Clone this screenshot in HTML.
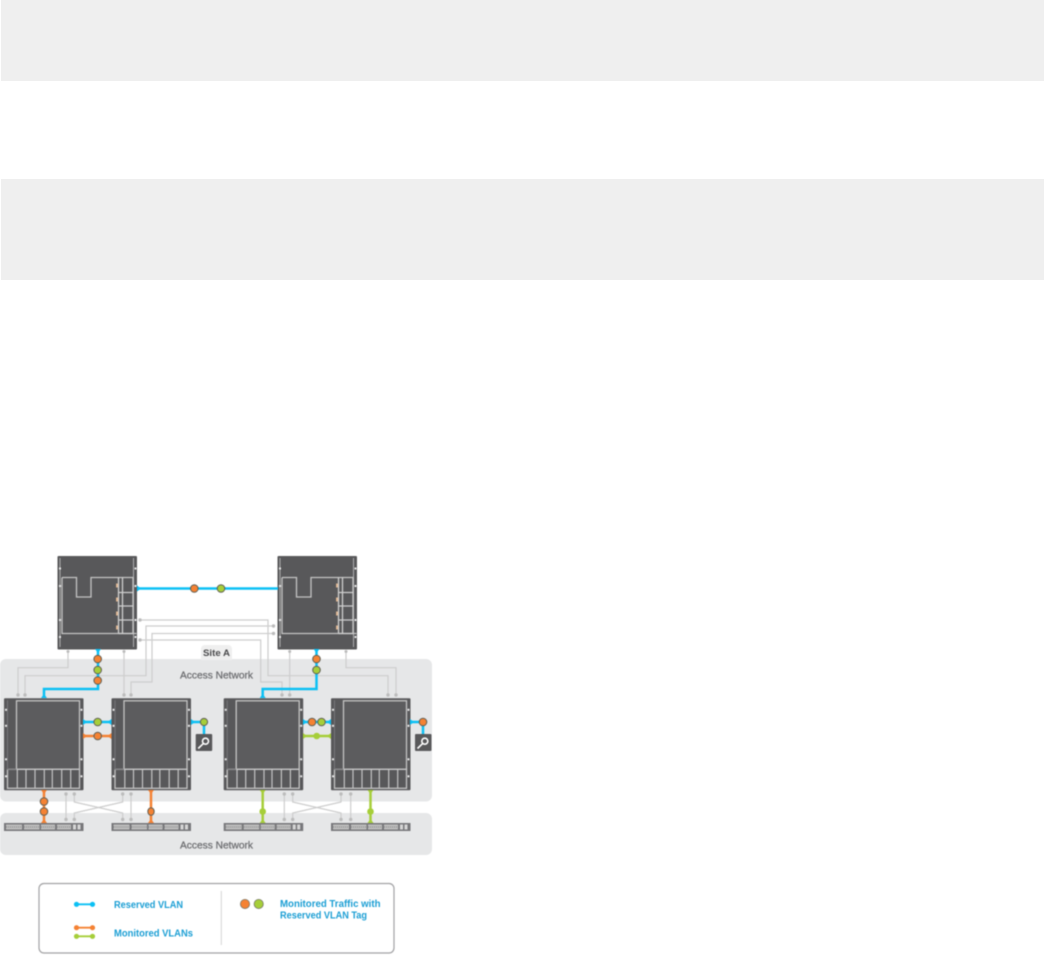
<!DOCTYPE html>
<html>
<head>
<meta charset="utf-8">
<style>
html,body{margin:0;padding:0;background:#fff;width:1044px;height:960px;overflow:hidden}
.bar{position:absolute;left:1px;right:0;background:#efefef}
svg{position:absolute;left:0;top:0;filter:blur(.5px)}
text{font-family:"Liberation Sans",sans-serif}
</style>
</head>
<body>
<div class="bar" style="top:0;height:81px"></div>
<div class="bar" style="top:179px;height:101px"></div>
<svg width="1044" height="960" viewBox="0 0 1044 960" xmlns="http://www.w3.org/2000/svg">
<defs>
<g id="top">
  <rect x="0" y="0" width="79.5" height="93.5" rx="1" fill="#58585a"/>
  <path d="M2.5 2V91M76 2V91" stroke="#c4c4c4" stroke-width="1" fill="none" opacity=".8"/>
  <path d="M4.5 21.5H19V41H33.5V21.5H75.5V77.5M4.5 21.5V77.5H79" stroke="#c4c4c4" stroke-width="1.3" fill="none"/>
  <path d="M61 21.5V77.5M65 21.5V77.5M61 36.5H76M61 50H76M61 64H76M61 77.5H76" stroke="#cfcfcf" stroke-width="1.3" fill="none"/>
  <path d="M59.5 27.5v4M59.5 41.5v4M59.5 55.5v4M59.5 69.5v4" stroke="#e8bd98" stroke-width="1.8" fill="none"/>
  <g fill="#e8e8e8"><rect x="1.5" y="11.5" width="2" height="2"/><rect x="1.5" y="29" width="2" height="2"/><rect x="1.5" y="63" width="2" height="2"/><rect x="1.5" y="80" width="2" height="2"/><rect x="77" y="11.5" width="2" height="2"/><rect x="77" y="29" width="2" height="2"/><rect x="77" y="63" width="2" height="2"/><rect x="77" y="80" width="2" height="2"/></g>
</g>
<g id="low">
  <rect x="0" y="0" width="79.5" height="92" rx="1" fill="#58585a"/>
  <rect x="12.5" y="2.5" width="63" height="68.5" fill="#5c5c5e" stroke="#c4c4c4" stroke-width="1.3"/>
  <rect x="3.5" y="71" width="72" height="19" fill="none" stroke="#c4c4c4" stroke-width="1.3"/>
  <path d="M13.3 71V90M22 71V90M31 71V90M40.3 71V90M48.3 71V90M57.7 71V90M66.7 71V90" stroke="#c4c4c4" stroke-width="1.2" fill="none"/>
  <path d="M3.5 2V71H12.5" stroke="#77777a" stroke-width="1" fill="none"/>
  <g fill="#e8e8e8"><rect x="1" y="10.5" width="2" height="2"/><rect x="1" y="26.5" width="2" height="2"/><rect x="1" y="60" width="2" height="2"/><rect x="1" y="77" width="2" height="2"/><rect x="76.5" y="10.5" width="2" height="2"/><rect x="76.5" y="26.5" width="2" height="2"/><rect x="76.5" y="60" width="2" height="2"/><rect x="76.5" y="77" width="2" height="2"/></g>
</g>
<g id="sw">
  <rect x="0" y="0" width="79.5" height="8" fill="#77777a"/>
  <rect x="2" y="1.5" width="16" height="5" fill="#bcbcbc"/>
  <rect x="20" y="1.5" width="15.5" height="5" fill="#bcbcbc"/>
  <rect x="37" y="1.5" width="14" height="5" fill="#bcbcbc"/>
  <rect x="53" y="1.5" width="14" height="5" fill="#bcbcbc"/>
  <rect x="69" y="1.5" width="3" height="5" fill="#d6d6d6"/>
  <rect x="73.5" y="1.5" width="3" height="5" fill="#d6d6d6"/>
  <path d="M2 4H18M20 4H35.5M37 4H51M53 4H67" stroke="#777" stroke-width=".8" stroke-dasharray="1 1"/>
</g>
<g id="mag">
  <rect x="0" y="0" width="16.5" height="17" rx="1" fill="#58585a"/>
  <circle cx="9.8" cy="7.2" r="3" fill="none" stroke="#fff" stroke-width="1.6"/>
  <path d="M7.6 9.6L2.5 14.5" stroke="#fff" stroke-width="1.6"/>
</g>
</defs>

<rect x="0" y="659" width="432" height="142.5" rx="6" fill="#e6e7e8"/>
<rect x="0" y="813" width="432" height="42" rx="6" fill="#e6e7e8"/>
<path d="M201 660V649a4 4 0 0 1 4-4H228a4 4 0 0 1 4 4V660Z" fill="#efefef"/>
<text x="203" y="656" font-size="9.5" font-weight="bold" fill="#4a4a4c" textLength="27" lengthAdjust="spacingAndGlyphs">Site A</text>
<text x="180" y="678.5" font-size="10.5" fill="#6d6e71" stroke="#6d6e71" stroke-width=".25" textLength="73" lengthAdjust="spacingAndGlyphs">Access Network</text>
<text x="180" y="848.5" font-size="10.5" fill="#6d6e71" stroke="#6d6e71" stroke-width=".25" textLength="73" lengthAdjust="spacingAndGlyphs">Access Network</text>

<!-- grey wiring -->
<g fill="none" stroke="#cdcdcd" stroke-width="1.2">
  <path d="M68 651V667.7H18V695"/>
  <path d="M124 651V695"/>
  <path d="M25 695V675.7H146V626H273.5"/>
  <path d="M131 695V682H152V633.5H273.5"/>
  <path d="M140 620H268V675.7H388V695"/>
  <path d="M140 640H260.7V682H282V695"/>
  <path d="M289.7 651V695"/>
  <path d="M346 651V667.7H396V695"/>
  <path d="M66 794V819M131 794V819M74.3 794V802L122.7 813V819M122.7 794V802L74.3 813V819"/>
  <path d="M284.3 794V819M350.7 794V819M292.7 794V802L341 813V819M341 794V802L292.7 813V819"/>
</g>
<g fill="#bcbcbc">
  <circle cx="140" cy="620" r="1.7"/><circle cx="140" cy="640" r="1.7"/><circle cx="273.5" cy="626" r="1.7"/><circle cx="273.5" cy="633.5" r="1.7"/>
  <circle cx="68" cy="651.5" r="1.5"/><circle cx="124" cy="651.5" r="1.5"/><circle cx="289.7" cy="651.5" r="1.5"/><circle cx="346" cy="651.5" r="1.5"/>
  <circle cx="18" cy="695" r="1.7"/><circle cx="25" cy="695" r="1.7"/><circle cx="124" cy="695" r="1.7"/><circle cx="131" cy="695" r="1.7"/>
  <circle cx="282" cy="695" r="1.7"/><circle cx="289.7" cy="695" r="1.7"/><circle cx="388" cy="695" r="1.7"/><circle cx="396" cy="695" r="1.7"/>
  <circle cx="66" cy="794" r="1.7"/><circle cx="74.3" cy="794" r="1.7"/><circle cx="122.7" cy="794" r="1.7"/><circle cx="131" cy="794" r="1.7"/>
  <circle cx="66" cy="819.5" r="1.7"/><circle cx="74.3" cy="819.5" r="1.7"/><circle cx="122.7" cy="819.5" r="1.7"/><circle cx="131" cy="819.5" r="1.7"/>
  <circle cx="284.3" cy="794" r="1.7"/><circle cx="292.7" cy="794" r="1.7"/><circle cx="341" cy="794" r="1.7"/><circle cx="350.7" cy="794" r="1.7"/>
  <circle cx="284.3" cy="819.5" r="1.7"/><circle cx="292.7" cy="819.5" r="1.7"/><circle cx="341" cy="819.5" r="1.7"/><circle cx="350.7" cy="819.5" r="1.7"/>
</g>

<!-- devices -->
<use href="#top" x="57.5" y="556"/>
<use href="#top" x="277.5" y="556"/>
<use href="#low" x="4" y="698.3"/>
<use href="#low" x="111.5" y="698.3"/>
<use href="#low" x="223.7" y="698.3"/>
<use href="#low" x="331" y="698.3"/>
<use href="#sw" x="4" y="823"/>
<use href="#sw" x="111.5" y="823"/>
<use href="#sw" x="223.7" y="823"/>
<use href="#sw" x="331" y="823"/>
<use href="#mag" x="195.7" y="734"/>
<use href="#mag" x="415" y="734"/>

<!-- blue links -->
<g fill="none" stroke="#0cc0f4" stroke-width="2.5">
  <path d="M137 588.5H278"/>
  <path d="M98 649V689H44V698"/>
  <path d="M316.5 649V689H262.7V698"/>
  <path d="M83 722H111.5"/>
  <path d="M191 722H204V734"/>
  <path d="M303 722H331"/>
  <path d="M410 722H423V734"/>
</g>
<g fill="#0cc0f4">
  <path d="M137 585.5L141 588.5L137 591.5Z"/>
  <path d="M95 649H101L98 653Z"/>
  <path d="M313.5 649H319.5L316.5 653Z"/>
  <path d="M41 698H47L44 694Z"/>
  <path d="M259.7 698H265.7L262.7 694Z"/>
  <path d="M83 719L87 722L83 725ZM111.5 719L107.5 722L111.5 725ZM191 719L195 722L191 725ZM303 719L307 722L303 725ZM331 719L327 722L331 725ZM410 719L414 722L410 725Z"/>
</g>

<!-- orange / green links -->
<g fill="none" stroke-width="2.5">
  <path d="M83 736H111.5" stroke="#f58233"/>
  <path d="M44 790V823" stroke="#f58233"/>
  <path d="M151 790V823" stroke="#f58233"/>
  <path d="M303 736H331" stroke="#a6ce39"/>
  <path d="M262.7 790V823" stroke="#a6ce39"/>
  <path d="M370.5 790V823" stroke="#a6ce39"/>
</g>
<path d="M83 733L87 736L83 739ZM111.5 733L107.5 736L111.5 739ZM41 790H47L44 794ZM41 823H47L44 819ZM148 790H154L151 794ZM148 823H154L151 819Z" fill="#f58233"/>
<path d="M303 733L307 736L303 739ZM331 733L327 736L331 739ZM259.7 790H265.7L262.7 794ZM259.7 823H265.7L262.7 819ZM367.5 790H373.5L370.5 794ZM367.5 823H373.5L370.5 819Z" fill="#a6ce39"/>

<!-- tag circles -->
<g stroke="#5f5f55" stroke-width="1">
  <g fill="#f58233">
    <circle cx="194.3" cy="588.5" r="3.8"/>
    <circle cx="97.7" cy="659" r="3.8"/><circle cx="97.7" cy="680.5" r="3.8"/>
    <circle cx="316.5" cy="659" r="3.8"/>
    <circle cx="97.7" cy="736" r="3.8"/>
    <circle cx="312" cy="722" r="3.8"/>
    <circle cx="423" cy="722" r="3.8"/>
    <circle cx="44" cy="801.5" r="3.8"/><circle cx="44" cy="811.5" r="3.8"/>
    <ellipse cx="151" cy="811.5" rx="3.2" ry="3.8"/>
  </g>
  <g fill="#a6ce39">
    <circle cx="221" cy="588.5" r="3.8"/>
    <circle cx="97.7" cy="670" r="3.8"/>
    <circle cx="316.5" cy="670" r="3.8"/>
    <circle cx="97.7" cy="722" r="3.8"/>
    <circle cx="204" cy="722" r="3.6"/>
    <circle cx="321.5" cy="722" r="3.8"/>
  </g>
</g>
<g fill="#a6ce39">
  <circle cx="316.7" cy="736" r="3.3"/>
  <circle cx="262.7" cy="811.5" r="3.3"/>
  <circle cx="370.5" cy="811.5" r="3.3"/>
</g>

<!-- legend -->
<rect x="39" y="883.5" width="355" height="69.5" rx="5" fill="#fff" stroke="#a2a2a4" stroke-width="1.2"/>
<path d="M221.3 891V945" stroke="#d4d4d4" stroke-width="1"/>
<g fill="none" stroke-width="1.8">
  <path d="M76 904.3H93" stroke="#0cc0f4"/>
  <path d="M76 927.7H93" stroke="#f58233"/>
  <path d="M76 936.3H93" stroke="#a6ce39"/>
</g>
<g fill="#0cc0f4"><circle cx="76.5" cy="904.3" r="2.6"/><circle cx="92.5" cy="904.3" r="2.6"/></g>
<g fill="#f58233"><circle cx="76.5" cy="927.7" r="2.6"/><circle cx="92.5" cy="927.7" r="2.6"/></g>
<g fill="#a6ce39"><circle cx="76.5" cy="936.3" r="2.6"/><circle cx="92.5" cy="936.3" r="2.6"/></g>
<circle cx="245" cy="904" r="4.6" fill="#f58233" stroke="#77776a" stroke-width=".8"/>
<circle cx="258.7" cy="904" r="4.6" fill="#a6ce39" stroke="#77776a" stroke-width=".8"/>
<g font-size="10.5" fill="#1a9ed4" font-weight="bold">
  <text x="114" y="908" textLength="69" lengthAdjust="spacingAndGlyphs">Reserved VLAN</text>
  <text x="114" y="936.5" textLength="79" lengthAdjust="spacingAndGlyphs">Monitored VLANs</text>
  <text x="280" y="907" textLength="100.5" lengthAdjust="spacingAndGlyphs">Monitored Traffic with</text>
  <text x="280" y="918.5" textLength="87" lengthAdjust="spacingAndGlyphs">Reserved VLAN Tag</text>
</g>
</svg>
</body>
</html>
